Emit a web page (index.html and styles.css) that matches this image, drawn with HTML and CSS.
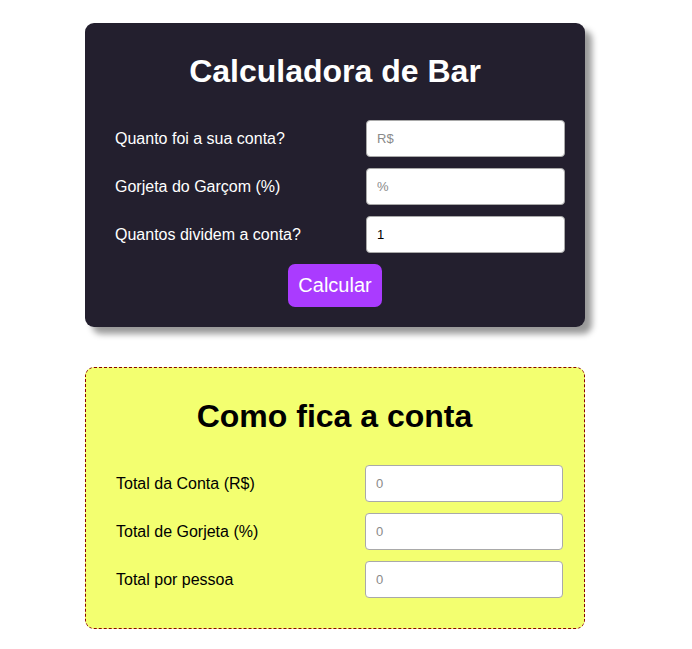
FILE: index.html
```html
<!DOCTYPE html>
<html lang="pt-BR">
<head>
<meta charset="utf-8">
<title>Calculadora de Bar</title>
<link rel="stylesheet" href="styles.css">
</head>
<body>
<main class="page">
  <section class="card card-dark">
    <h1 class="card-title">Calculadora de Bar</h1>
    <div class="rows">
      <div class="row">
        <label class="row-label" for="conta">Quanto foi a sua conta?</label>
        <input class="field" id="conta" type="text" placeholder="R$">
      </div>
      <div class="row">
        <label class="row-label" for="gorjeta">Gorjeta do Garçom (%)</label>
        <input class="field" id="gorjeta" type="text" placeholder="%">
      </div>
      <div class="row">
        <label class="row-label" for="pessoas">Quantos dividem a conta?</label>
        <input class="field" id="pessoas" type="text" value="1">
      </div>
      <div class="actions">
        <button class="btn" type="button">Calcular</button>
      </div>
    </div>
  </section>

  <section class="card card-result">
    <h1 class="card-title">Como fica a conta</h1>
    <div class="rows">
      <div class="row">
        <label class="row-label" for="total">Total da Conta (R$)</label>
        <input class="field" id="total" type="text" placeholder="0">
      </div>
      <div class="row">
        <label class="row-label" for="totalg">Total de Gorjeta (%)</label>
        <input class="field" id="totalg" type="text" placeholder="0">
      </div>
      <div class="row">
        <label class="row-label" for="pp">Total por pessoa</label>
        <input class="field" id="pp" type="text" placeholder="0">
      </div>
    </div>
  </section>
</main>
</body>
</html>
```
FILE: styles.css
```css
* { box-sizing: border-box; }
html, body { margin: 0; background: #ffffff; }
body { font-family: "Liberation Sans", Arial, sans-serif; }

.page {
  padding: 23px 0 0 85px;
  display: flex;
  flex-direction: column;
  gap: 40px;
}

.card {
  width: 500px;
  border-radius: 9px;
  padding: 30px 20px 20px 20px;
}

.card-dark {
  background: #231f2e;
  color: #ffffff;
  box-shadow: 7px 7px 6px rgba(0, 0, 0, 0.4);
}

.card-result {
  background: #f3ff70;
  color: #000000;
  border: 1px dashed #8b0000;
  padding: 30px 21px 30px 20px;
}

.card-title {
  margin: 0 0 30px;
  font-size: 32px;
  font-weight: bold;
  text-align: center;
  line-height: 37px;
}

.rows {
  display: flex;
  flex-direction: column;
  gap: 11px;
}

.row {
  display: flex;
  align-items: center;
  justify-content: space-between;
  padding-left: 10px;
}

.row-label {
  font-size: 16px;
}

.field {
  width: 199px;
  height: 37px;
  border: 1px solid #a9a9a9;
  border-radius: 4px;
  background: #ffffff;
  padding: 0 10px;
  font-family: "Liberation Sans", Arial, sans-serif;
  font-size: 13px;
  color: #000000;
}
.card-result .field { width: 198px; }

.field::placeholder { color: #8a8a8a; }

.actions {
  display: flex;
  justify-content: center;
}

.btn {
  background: #aa3bff;
  color: #ffffff;
  border: none;
  border-radius: 7px;
  font-family: "Liberation Sans", Arial, sans-serif;
  font-size: 20px;
  padding: 10px 10px;
  width: 94px;
  height: 43px;
}
```
